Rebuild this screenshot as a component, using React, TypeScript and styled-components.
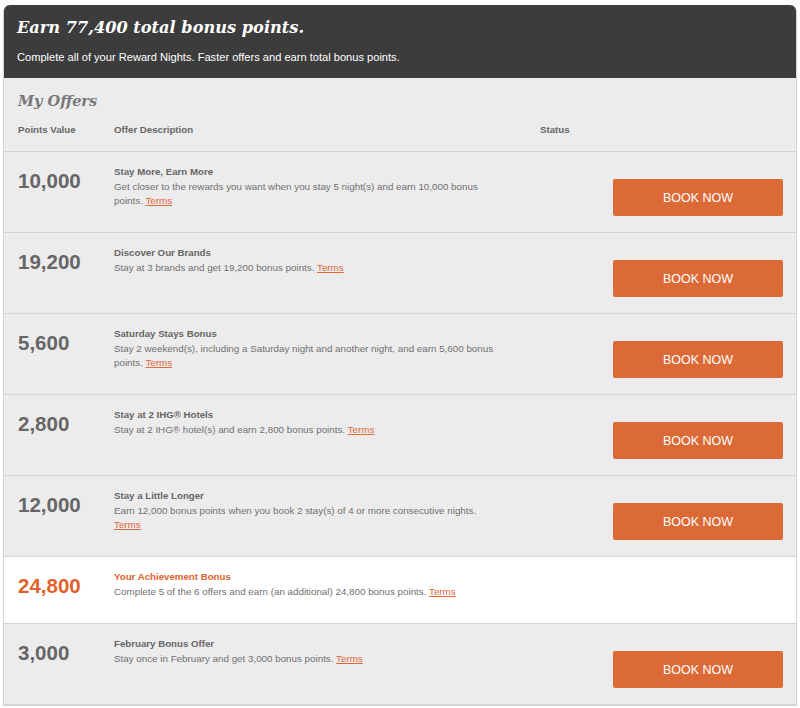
import * as React from 'react'
import styled, { createGlobalStyle } from 'styled-components'

const GlobalStyle = createGlobalStyle`
  html, body {
    margin: 0;
    padding: 0;
    background: #ffffff;
  }
  body {
    font-family: 'Liberation Sans', Arial, sans-serif;
  }
`

const ORANGE = '#dc6a36'
const GREY = '#666666'

interface IOffer {
  points: string
  title: string
  description: string
  bookable: boolean
  highlight?: boolean
}

const offers: IOffer[] = [
  {
    points: '10,000',
    title: 'Stay More, Earn More',
    description:
      'Get closer to the rewards you want when you stay 5 night(s) and earn 10,000 bonus points.',
    bookable: true,
  },
  {
    points: '19,200',
    title: 'Discover Our Brands',
    description: 'Stay at 3 brands and get 19,200 bonus points.',
    bookable: true,
  },
  {
    points: '5,600',
    title: 'Saturday Stays Bonus',
    description:
      'Stay 2 weekend(s), including a Saturday night and another night, and earn 5,600 bonus points.',
    bookable: true,
  },
  {
    points: '2,800',
    title: 'Stay at 2 IHG® Hotels',
    description: 'Stay at 2 IHG® hotel(s) and earn 2,800 bonus points.',
    bookable: true,
  },
  {
    points: '12,000',
    title: 'Stay a Little Longer',
    description:
      'Earn 12,000 bonus points when you book 2 stay(s) of 4 or more consecutive nights.',
    bookable: true,
  },
  {
    points: '24,800',
    title: 'Your Achievement Bonus',
    description:
      'Complete 5 of the 6 offers and earn (an additional) 24,800 bonus points.',
    bookable: false,
    highlight: true,
  },
  {
    points: '3,000',
    title: 'February Bonus Offer',
    description: 'Stay once in February and get 3,000 bonus points.',
    bookable: true,
  },
]

const Container = styled.div`
  margin: 5px 3px 0 3px;
  width: 794px;
  box-sizing: border-box;
  border: 1px solid #d4d4d4;
  border-top: none;
  border-radius: 6px 6px 0 0;
  background: #ececec;
`
const Banner = styled.div`
  background: #3c3c3c;
  border-radius: 6px 6px 0 0;
  padding: 11px 14px 13px 13px;
  color: #ffffff;
`
const BannerTitle = styled.h1`
  margin: 0;
  font-family: 'DejaVu Serif', Georgia, serif;
  font-style: italic;
  font-weight: bold;
  font-size: 16.2px;
  line-height: 24px;
`
const BannerText = styled.p`
  margin: 9px 0 0 0;
  font-size: 11.1px;
  line-height: 16px;
`
const SectionTitle = styled.h2`
  margin: 0;
  padding: 12px 14px 0 14px;
  font-family: 'DejaVu Serif', Georgia, serif;
  font-style: italic;
  font-weight: bold;
  font-size: 14.5px;
  line-height: 22px;
  color: #777777;
`
const Grid = styled.div<{ $highlight?: boolean }>`
  display: grid;
  grid-template-columns: 96px 426px 1fr;
  padding: 13px 13px ${({ $highlight }) => ($highlight ? '24px' : '16px')} 14px;
  border-bottom: 1px solid #d6d6d6;
  background: ${({ $highlight }) => ($highlight ? '#ffffff' : 'transparent')};
`
const HeaderRow = styled(Grid)`
  padding-top: 11px;
  padding-bottom: 14px;
`
const HeaderCell = styled.div`
  font-size: 9.7px;
  line-height: 14px;
  font-weight: bold;
  color: ${GREY};
`
const Points = styled.div<{ $highlight?: boolean }>`
  margin-top: 4px;
  font-size: 20.5px;
  line-height: 24px;
  font-weight: bold;
  color: ${({ $highlight }) => ($highlight ? '#e0622b' : GREY)};
`
const Description = styled.div`
  max-width: 384px;
`
const OfferTitle = styled.div<{ $highlight?: boolean }>`
  font-size: 9.7px;
  line-height: 14px;
  font-weight: bold;
  color: ${({ $highlight }) => ($highlight ? '#e0622b' : GREY)};
`
const OfferText = styled.div`
  margin-top: 1px;
  font-size: 9.8px;
  line-height: 14px;
  color: #707070;
`
const TermsLink = styled.a`
  color: #e0683a;
  text-decoration: underline;
  cursor: pointer;
`
const Status = styled.div`
  display: flex;
  justify-content: flex-end;
  align-items: flex-start;
`
const BookButton = styled.button`
  margin-top: 14px;
  width: 170px;
  height: 37px;
  border: none;
  border-radius: 2px;
  background: ${ORANGE};
  color: #ffffff;
  font-family: 'Liberation Sans', Arial, sans-serif;
  font-size: 12.5px;
  cursor: pointer;
`

const OfferRow = ({ offer }: { offer: IOffer }) => (
  <Grid $highlight={offer.highlight}>
    <Points $highlight={offer.highlight}>{offer.points}</Points>
    <Description>
      <OfferTitle $highlight={offer.highlight}>{offer.title}</OfferTitle>
      <OfferText>
        {offer.description} <TermsLink>Terms</TermsLink>
      </OfferText>
    </Description>
    <Status>{offer.bookable && <BookButton>BOOK NOW</BookButton>}</Status>
  </Grid>
)

export default function App() {
  return (
    <>
      <GlobalStyle />
      <Container>
        <Banner>
          <BannerTitle>Earn 77,400 total bonus points.</BannerTitle>
          <BannerText>
            Complete all of your Reward Nights. Faster offers and earn total
            bonus points.
          </BannerText>
        </Banner>
        <SectionTitle>My Offers</SectionTitle>
        <HeaderRow>
          <HeaderCell>Points Value</HeaderCell>
          <HeaderCell>Offer Description</HeaderCell>
          <HeaderCell>Status</HeaderCell>
        </HeaderRow>
        {offers.map((o, i) => (
          <OfferRow key={i} offer={o} />
        ))}
      </Container>
    </>
  )
}
